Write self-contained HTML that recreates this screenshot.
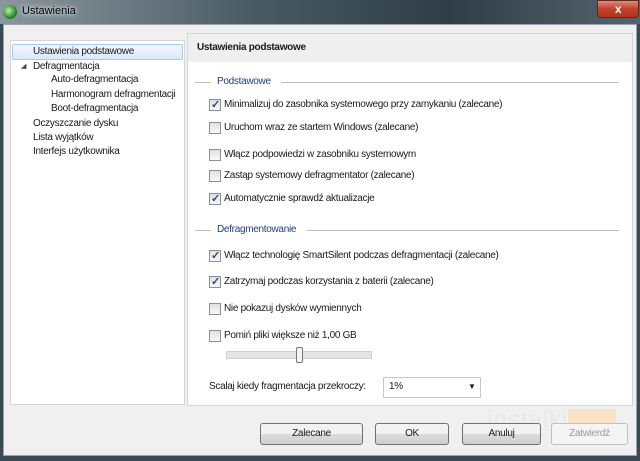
<!DOCTYPE html><html><head><style>
*{margin:0;padding:0;box-sizing:border-box}
body{width:640px;height:461px;overflow:hidden;font-family:"Liberation Sans",sans-serif;font-size:10px;letter-spacing:-0.3px;color:#1a1a1a;background:#3a4a55;position:relative}
.t{position:absolute;white-space:nowrap}
#title{position:absolute;left:0;top:0;width:640px;height:24px;background:linear-gradient(90deg,#8a979e,#4a5a64 40%,#2e3d47 70%,#55646c)}
#body{position:absolute;left:3px;top:24px;width:634px;height:432px;background:#f0f0f0;border:1px solid #9aa4aa}
#left{position:absolute;left:10px;top:40px;width:175px;height:365px;background:#fff;border:1px solid #d5d5d5}
#right{position:absolute;left:187px;top:33px;width:446px;height:373px;background:#fff;border:1px solid #d5d5d5}
#rh{position:absolute;left:188px;top:34px;width:444px;height:28px;background:#efefef}
.cb{position:absolute;left:209px;width:12px;height:12px;border:1px solid #8e8f8f;background:linear-gradient(#e0e0e0,#f8f8f8)}
.cb.c::after{content:"✓";position:absolute;left:1px;top:-2px;font-size:11px;color:#2a4b8a;font-weight:bold}
.lbl{position:absolute;left:224px;white-space:nowrap}
.btn{position:absolute;top:423px;height:22px;border:1px solid #707070;border-radius:3px;background:linear-gradient(#f2f2f2 50%,#dcdcdc 50%,#cfcfcf);text-align:center;line-height:20px}
.hr{position:absolute;height:1px;background:#c0c0c0}
</style></head><body>
<div id="title"></div>
<div class="t" style="left:3px;top:5px;width:14px;height:14px;border-radius:50%;background:radial-gradient(circle at 40% 40%,#b8f0a0,#2c8a2c 60%,#0d3d0d)"></div>
<div class="t" style="left:22px;top:5px;font-size:11px;letter-spacing:0;color:#000;text-shadow:0 0 6px #dfe6ea,0 0 4px #dfe6ea">Ustawienia</div>
<div class="t" style="left:597px;top:0;width:42px;height:18px;background:linear-gradient(#e08a7a,#c2422c 50%,#b8321c);border:1px solid #5a2a20;border-radius:0 0 4px 4px;color:#fff;font-weight:bold;text-align:center;line-height:16px;font-size:12px">x</div>
<div id="body"></div>
<div id="left"></div>
<div class="t" style="left:12px;top:44px;width:171px;height:16px;background:linear-gradient(#f2f7fd,#dce9f8);border:1px solid #a8c8ec;border-radius:2px"></div>
<div class="t" style="left:33px;top:46px">Ustawienia podstawowe</div>
<div class="t" style="left:21px;top:62px;font-size:7px;color:#444">◢</div>
<div class="t" style="left:33px;top:61px">Defragmentacja</div>
<div class="t" style="left:51px;top:74px">Auto-defragmentacja</div>
<div class="t" style="left:51px;top:89px">Harmonogram defragmentacji</div>
<div class="t" style="left:51px;top:103px">Boot-defragmentacja</div>
<div class="t" style="left:33px;top:118px">Oczyszczanie dysku</div>
<div class="t" style="left:33px;top:132px">Lista wyjątków</div>
<div class="t" style="left:33px;top:146px">Interfejs użytkownika</div>
<div id="right"></div><div id="rh"></div>
<div class="t" style="left:197px;top:42px;font-weight:bold">Ustawienia podstawowe</div>
<div class="hr" style="left:195px;top:82px;width:16px"></div>
<div class="t" style="left:217px;top:76px;color:#1e3f7a">Podstawowe</div>
<div class="hr" style="left:281px;top:82px;width:338px"></div>
<div class="cb c" style="top:99px"></div><div class="lbl" style="top:99px">Minimalizuj do zasobnika systemowego przy zamykaniu (zalecane)</div>
<div class="cb" style="top:122px"></div><div class="lbl" style="top:122px">Uruchom wraz ze startem Windows (zalecane)</div>
<div class="cb" style="top:149px"></div><div class="lbl" style="top:149px">Włącz podpowiedzi w zasobniku systemowym</div>
<div class="cb" style="top:170px"></div><div class="lbl" style="top:170px">Zastąp systemowy defragmentator (zalecane)</div>
<div class="cb c" style="top:193px"></div><div class="lbl" style="top:193px">Automatycznie sprawdź aktualizacje</div>
<div class="hr" style="left:195px;top:230px;width:16px"></div>
<div class="t" style="left:217px;top:224px;color:#1e3f7a">Defragmentowanie</div>
<div class="hr" style="left:306px;top:230px;width:313px"></div>
<div class="cb c" style="top:250px"></div><div class="lbl" style="top:250px">Włącz technologię SmartSilent podczas defragmentacji (zalecane)</div>
<div class="cb c" style="top:276px"></div><div class="lbl" style="top:276px">Zatrzymaj podczas korzystania z baterii (zalecane)</div>
<div class="cb" style="top:303px"></div><div class="lbl" style="top:303px">Nie pokazuj dysków wymiennych</div>
<div class="cb" style="top:330px"></div><div class="lbl" style="top:330px">Pomiń pliki większe niż 1,00 GB</div>
<div class="t" style="left:226px;top:351px;width:146px;height:8px;background:#e4e4e4;border:1px solid #d0d0d0"></div>
<div class="t" style="left:296px;top:347px;width:7px;height:16px;background:#f4f4f4;border:1px solid #777;border-radius:2px"></div>
<div class="t" style="left:209px;top:381px">Scalaj kiedy fragmentacja przekroczy:</div>
<div class="t" style="left:383px;top:377px;width:98px;height:21px;background:#fff;border:1px solid #c8c8c8"></div>
<div class="t" style="left:389px;top:381px">1%</div>
<div class="t" style="left:468px;top:382px;font-size:8px">▼</div>
<div class="t" style="left:487px;top:406px;font-size:24px;letter-spacing:1px;color:#e8e8e8">instalki</div>
<div class="t" style="left:568px;top:409px;width:48px;height:22px;background:#f9e2c4"></div>
<div class="btn" style="left:260px;width:103px">Zalecane</div>
<div class="btn" style="left:375px;width:74px">OK</div>
<div class="btn" style="left:462px;width:79px">Anuluj</div>
<div class="btn" style="left:551px;width:77px;border-color:#c0c0c0;background:#f4f4f4;color:#9a9a9a">Zatwierdź</div>
</body></html>
